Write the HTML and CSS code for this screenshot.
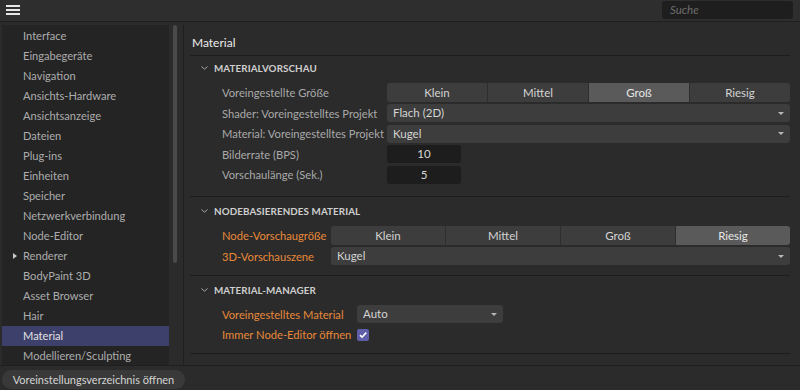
FILE: index.html
```html
<!DOCTYPE html>
<html lang="de">
<head>
<meta charset="utf-8">
<title>Voreinstellungen</title>
<link rel="stylesheet" href="styles.css">
</head>
<body>
<div class="app">
  <header class="topbar">
    <div class="menu"><span></span><span></span><span></span></div>
    <div class="search">Suche</div>
  </header>
  <div class="middle">
    <nav class="sidebar">
      <ul>
        <li>Interface</li>
        <li>Eingabegeräte</li>
        <li>Navigation</li>
        <li>Ansichts-Hardware</li>
        <li>Ansichtsanzeige</li>
        <li>Dateien</li>
        <li>Plug-ins</li>
        <li>Einheiten</li>
        <li>Speicher</li>
        <li>Netzwerkverbindung</li>
        <li>Node-Editor</li>
        <li class="has-children"><span class="tri"></span>Renderer</li>
        <li>BodyPaint 3D</li>
        <li>Asset Browser</li>
        <li>Hair</li>
        <li class="active">Material</li>
        <li>Modellieren/Sculpting</li>
      </ul>
    </nav>
    <div class="gutter"><div class="thumb"></div></div>
    <main class="main">
      <h1 class="title">Material</h1>

      <section class="group g1">
        <div class="ghead"><svg class="chev" width="7" height="4" viewBox="0 0 7 4"><path d="M0.5 0.5 L3.5 3.2 L6.5 0.5" fill="none" stroke="#a8a8a8" stroke-width="1"/></svg>MATERIALVORSCHAU</div>
        <div class="grid">
          <div class="lbl">Voreingestellte Größe</div>
          <div class="seg"><span>Klein</span><span>Mittel</span><span class="on">Groß</span><span>Riesig</span></div>
          <div class="lbl">Shader: Voreingestelltes Projekt</div>
          <div class="dd">Flach (2D)<i class="arrow"></i></div>
          <div class="lbl">Material: Voreingestelltes Projekt</div>
          <div class="dd">Kugel<i class="arrow"></i></div>
          <div class="lbl">Bilderrate (BPS)</div>
          <div class="num">10</div>
          <div class="lbl">Vorschaulänge (Sek.)</div>
          <div class="num">5</div>
        </div>
      </section>

      <section class="group g2">
        <div class="ghead"><svg class="chev" width="7" height="4" viewBox="0 0 7 4"><path d="M0.5 0.5 L3.5 3.2 L6.5 0.5" fill="none" stroke="#a8a8a8" stroke-width="1"/></svg>NODEBASIERENDES MATERIAL</div>
        <div class="grid">
          <div class="lbl orange">Node-Vorschaugröße</div>
          <div class="seg"><span>Klein</span><span>Mittel</span><span>Groß</span><span class="on">Riesig</span></div>
          <div class="lbl orange">3D-Vorschauszene</div>
          <div class="dd">Kugel<i class="arrow"></i></div>
        </div>
      </section>

      <section class="group g3">
        <div class="ghead"><svg class="chev" width="7" height="4" viewBox="0 0 7 4"><path d="M0.5 0.5 L3.5 3.2 L6.5 0.5" fill="none" stroke="#a8a8a8" stroke-width="1"/></svg>MATERIAL-MANAGER</div>
        <div class="grid">
          <div class="lbl orange">Voreingestelltes Material</div>
          <div class="dd short">Auto<i class="arrow"></i></div>
          <div class="lbl orange">Immer Node-Editor öffnen</div>
          <div class="cbwrap"><span class="cb"><svg width="12" height="12" viewBox="0 0 12 12"><path d="M3 6.2 L5.1 8.2 L9.2 3.6" fill="none" stroke="#ffffff" stroke-width="1.6"/></svg></span></div>
        </div>
      </section>
    </main>
  </div>
  <footer class="bottombar">
    <button class="pill">Voreinstellungsverzeichnis öffnen</button>
  </footer>
</div>
</body>
</html>
```

FILE: styles.css
```css
* { box-sizing: border-box; }
html, body { margin: 0; padding: 0; }
body {
  background: #2b2b2b;
  font-family: Lato, "Noto Sans", sans-serif;
  font-size: 11.2px;
  color: #b0b0b0;
}
.app {
  width: 800px;
  height: 390px;
  display: flex;
  flex-direction: column;
  overflow: hidden;
}

/* top bar */
.topbar {
  height: 22px;
  flex: 0 0 22px;
  background: #2e2e2e;
  border-bottom: 1px solid #1f1f1f;
  display: flex;
  align-items: flex-start;
  justify-content: space-between;
}
.menu {
  margin: 5px 0 0 6px;
  width: 14px;
  display: flex;
  flex-direction: column;
  gap: 2px;
}
.menu span {
  display: block;
  height: 2px;
  background: #e6e6e6;
}
.search {
  margin: 1px 7px 0 0;
  width: 131px;
  height: 18px;
  background: #1e1e1e;
  border-radius: 3px;
  padding-left: 8px;
  line-height: 18px;
  font-style: italic;
  font-size: 11.5px;
  color: #6c6c6c;
}

/* middle */
.middle {
  flex: 1;
  display: flex;
  padding-top: 3px;
  min-height: 0;
}
.sidebar {
  width: 167px;
  margin-left: 2px;
  background: #242424;
}
.sidebar ul {
  list-style: none;
  margin: 0;
  padding: 1px 0 0 0;
}
.sidebar li {
  height: 20px;
  line-height: 20px;
  padding-left: 21px;
  color: #acacac;
  font-size: 11.1px;
  position: relative;
  white-space: nowrap;
}
.sidebar li.active {
  background: #3e406c;
  color: #e2e2e2;
}
.tri {
  position: absolute;
  left: 11px;
  top: 7px;
  width: 0;
  height: 0;
  border-top: 3px solid transparent;
  border-bottom: 3px solid transparent;
  border-left: 4px solid #c8c8c8;
}
.gutter {
  width: 14px;
  padding-left: 4px;
}
.thumb {
  width: 4px;
  height: 238px;
  background: #4a4a4a;
  border-radius: 2px;
}

.main {
  flex: 1;
  border-left: 1px solid #1f1f1f;
  padding: 0 10px 0 6px;
}
.title {
  margin: 0;
  padding: 11px 0 5px 2px;
  line-height: 14px;
  font-size: 12px;
  font-weight: normal;
  color: #ececec;
  border-bottom: 1px solid #1c1c1c;
}

.group {
  border-bottom: 1px solid #1c1c1c;
}
.g1 { padding-top: 2px; padding-bottom: 12px; }
.g2 { padding-top: 4px; padding-bottom: 9px; }
.g3 { padding-top: 4px; padding-bottom: 9px; }

.ghead {
  height: 20px;
  display: flex;
  align-items: center;
  padding-left: 11px;
  font-weight: bold;
  font-size: 9.8px;
  color: #cfcfcf;
  letter-spacing: 0.1px;
}
.chev { margin-right: 6px; }

.grid {
  margin-top: 5px;
  padding-left: 32px;
  display: grid;
  row-gap: 1.5px;
  grid-auto-rows: 19px;
  align-items: center;
}
.g1 .grid { grid-template-columns: 165px 1fr; }
.g2 .grid { grid-template-columns: 109px 1fr; }
.g3 .grid { grid-template-columns: 135px 1fr; }

.lbl {
  color: #a9a9a9;
  white-space: nowrap;
  font-size: 11.2px;
}
.lbl.orange { color: #e8893a; }

.seg {
  height: 19px;
  display: flex;
  gap: 1px;
  border-radius: 3px;
  overflow: hidden;
  background: #2e2e2e;
}
.seg span {
  flex: 1;
  background: #3d3d3d;
  color: #d4d4d4;
  text-align: center;
  line-height: 19px;
  font-size: 11.5px;
}
.seg span.on { background: #5a5a5a; color: #e6e6e6; }

.dd {
  height: 18px;
  background: #3d3d3d;
  border-radius: 3px;
  padding-left: 6px;
  line-height: 18px;
  color: #d4d4d4;
  font-size: 11.5px;
  display: flex;
  align-items: center;
  justify-content: space-between;
}
.dd.short { width: 146px; }
.arrow {
  width: 0;
  height: 0;
  margin-right: 6px;
  border-left: 3.5px solid transparent;
  border-right: 3.5px solid transparent;
  border-top: 3.5px solid #b8b8b8;
}
.num {
  width: 74px;
  height: 18px;
  background: #1d1d1d;
  border-radius: 3px;
  text-align: center;
  line-height: 18px;
  color: #d8d8d8;
  font-size: 11.5px;
}
.cbwrap { display: flex; align-items: center; }
.cb {
  width: 12px;
  height: 12px;
  border-radius: 2px;
  background: #5f5ea8;
  display: block;
}
.cb svg { display: block; }

/* bottom */
.bottombar {
  flex: 0 0 25px;
  border-top: 1px solid #1f1f1f;
  background: #2b2b2b;
  padding: 4px 0 0 2px;
}
.pill {
  height: 19px;
  width: 183px;
  border: none;
  border-radius: 10px;
  background: #393939;
  color: #d4d4d4;
  font-family: inherit;
  font-size: 11px;
  padding: 0;
  text-align: center;
  line-height: 19px;
}
```
